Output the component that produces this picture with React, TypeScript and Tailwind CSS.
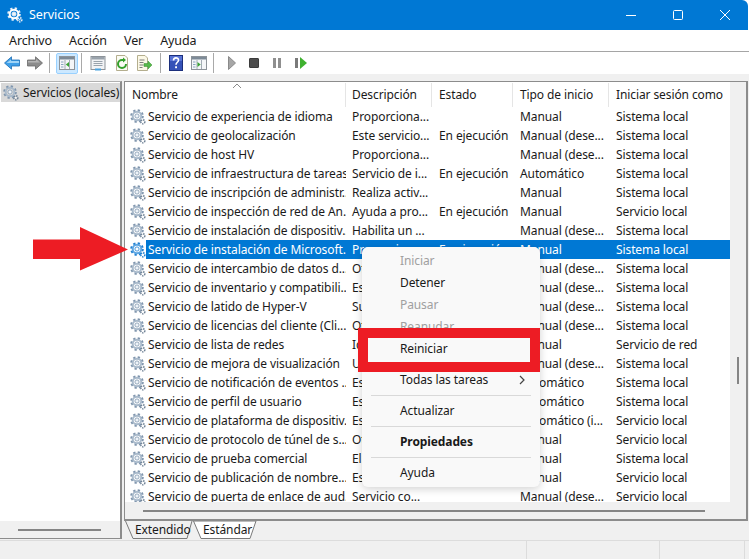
import React from "react";

type Row = [string, string, string, string, string];
const rows: Row[] = [
  ["Servicio de experiencia de idioma", "Proporciona...", "", "Manual", "Sistema local"],
  ["Servicio de geolocalización", "Este servicio...", "En ejecución", "Manual (dese...", "Sistema local"],
  ["Servicio de host HV", "Proporciona...", "", "Manual (dese...", "Sistema local"],
  ["Servicio de infraestructura de tareas...", "Servicio de i...", "En ejecución", "Automático", "Sistema local"],
  ["Servicio de inscripción de administr...", "Realiza activ...", "", "Manual", "Sistema local"],
  ["Servicio de inspección de red de An...", "Ayuda a pro...", "En ejecución", "Manual", "Servicio local"],
  ["Servicio de instalación de dispositiv...", "Habilita un ...", "", "Manual (dese...", "Sistema local"],
  ["Servicio de instalación de Microsoft...", "Proporciona...", "En ejecución", "Manual", "Sistema local"],
  ["Servicio de intercambio de datos d...", "Ofrece...", "", "Manual (dese...", "Sistema local"],
  ["Servicio de inventario y compatibili...", "Es...", "", "Manual (dese...", "Sistema local"],
  ["Servicio de latido de Hyper-V", "Su...", "", "Manual (dese...", "Sistema local"],
  ["Servicio de licencias del cliente (Cli...", "Ot...", "", "Manual (dese...", "Sistema local"],
  ["Servicio de lista de redes", "Id...", "", "Manual", "Servicio de red"],
  ["Servicio de mejora de visualización", "Un...", "", "Manual (dese...", "Sistema local"],
  ["Servicio de notificación de eventos ...", "Es...", "", "Automático", "Sistema local"],
  ["Servicio de perfil de usuario", "Es...", "", "Automático", "Sistema local"],
  ["Servicio de plataforma de dispositiv...", "Es...", "", "Automático (i...", "Servicio local"],
  ["Servicio de protocolo de túnel de s...", "Ot...", "", "Manual", "Servicio local"],
  ["Servicio de prueba comercial", "El...", "", "Manual", "Sistema local"],
  ["Servicio de publicación de nombre...", "Es...", "", "Manual", "Servicio local"],
  ["Servicio de puerta de enlace de aud...", "Servicio co...", "", "Manual (dese...", "Servicio local"],
];

function Gear({ selected = false, light = false }: { selected?: boolean; light?: boolean }) {
  const main = selected ? "#1f7fd0" : light ? "#e8eef5" : "#7f95ad";
  const ring = selected ? "#5ea6e2" : light ? "#ffffff" : "#a9bacb";
  const small = selected ? "#1f7fd0" : light ? "#e8eef5" : "#6f8296";
  return (
    <svg width="16" height="16" viewBox="0 0 16 16" className="shrink-0">
      <circle cx="7" cy="7" r="5.6" fill="none" stroke={main} strokeWidth="2.4" strokeDasharray="2.2 2.2" />
      <circle cx="7" cy="7" r="4.3" fill="none" stroke={ring} strokeWidth="2" />
      <circle cx="7" cy="7" r="2.1" fill={selected ? "#ffffff" : "#eef3f8"} stroke={main} strokeWidth="0.8" />
      <circle cx="12.8" cy="12.8" r="2" fill="none" stroke={small} strokeWidth="1.6" strokeDasharray="1.3 0.9" />
      <circle cx="12.8" cy="12.8" r="0.8" fill="#ffffff" />
    </svg>
  );
}

function Sep() {
  return <div className="w-px h-[20px] bg-[#a9a9a9]" />;
}

function WinIcon({ accent }: { accent: "back" | "play" }) {
  return (
    <svg width="16" height="16" viewBox="0 0 16 16">
      <rect x="0.5" y="1.5" width="15" height="13" fill="#f4f6f8" stroke="#8d9399" />
      <rect x="1" y="2" width="14" height="2.5" fill="#7d8a97" />
      <path d="M6 5v9M10.5 5v9" stroke="#a3acb5" />
      {accent === "back" ? (
        <path d="M10 7v5L6.8 9.5z" fill="#3aa335" />
      ) : (
        <path d="M6.5 7v5l3.2-2.5z" fill="#3aa335" />
      )}
      <path d="M2 7h2.5M2 9.5h2.5M2 12h2.5" stroke="#8aa4c0" />
    </svg>
  );
}

function Toolbar() {
  return (
    <div className="h-[22px] flex items-center bg-white shrink-0">
      <div className="w-[4px]" />
      <svg width="16" height="14" viewBox="0 0 16 14">
        <path d="M0.5 7L7.5 0.8V4H15.5V10H7.5V13.2z" fill="#3f9fe8" stroke="#1e6eb5" strokeWidth="0.8" />
        <path d="M2.5 7L7 3.5V5H15V7z" fill="#9fd4f7" />
      </svg>
      <div className="w-[7px]" />
      <svg width="16" height="14" viewBox="0 0 16 14">
        <path d="M15.5 7L8.5 0.8V4H0.5V10H8.5V13.2z" fill="#8c8c8c" stroke="#6b6b6b" strokeWidth="0.8" />
        <path d="M1 5h8V3l4 3.5H1z" fill="#b5b5b5" />
      </svg>
      <div className="w-[6px]" />
      <Sep />
      <div className="w-[6px]" />
      <div className="w-[22px] h-[21px] flex items-center justify-center bg-[#cce8ff] border border-[#99d1ff] rounded-[2px]">
        <WinIcon accent="back" />
      </div>
      <div className="w-[3px]" />
      <Sep />
      <div className="w-[8px]" />
      <svg width="16" height="16" viewBox="0 0 16 16">
        <rect x="1" y="1.5" width="14" height="13" fill="#f2f3f5" stroke="#8d9399" />
        <rect x="1.5" y="2" width="13" height="2.5" fill="#9aa3ac" />
        <path d="M3.5 6.5h9M3.5 8.5h9M3.5 10.5h9" stroke="#9aa3ac" />
        <rect x="5" y="13.5" width="6" height="2" fill="#4aa3e0" />
      </svg>
      <div className="w-[8px]" />
      <svg width="16" height="16" viewBox="0 0 16 16">
        <path d="M2.5 0.5H11L13.5 3V15.5H2.5z" fill="#fbfbf4" stroke="#b4ae8e" />
        <path d="M12 9A4 4 0 1 1 8 5H10" fill="none" stroke="#34a02c" strokeWidth="2" />
        <path d="M9 2.5L12 5L9 7.5z" fill="#34a02c" />
      </svg>
      <div className="w-[6px]" />
      <svg width="16" height="16" viewBox="0 0 16 16">
        <path d="M1.5 0.5H9L11.5 3V15.5H1.5z" fill="#fbf8e6" stroke="#b4ae8e" />
        <path d="M3.5 5h5M3.5 7.5h4M3.5 10h4M3.5 12.5h3" stroke="#7c7c7c" />
        <path d="M8 8.5h4V6l4 4-4 4v-2.5H8z" fill="#56b84a" stroke="#3b8e33" strokeWidth="0.5" />
      </svg>
      <div className="w-[8px]" />
      <Sep />
      <div className="w-[8px]" />
      <svg width="14" height="16" viewBox="0 0 14 16">
        <rect x="0.5" y="0.5" width="13" height="15" fill="#3552b8" stroke="#1c2f7c" />
        <rect x="1" y="1" width="12" height="5" fill="#5873d4" />
        <path d="M4.5 5.5C4.5 2 9.5 2 9.5 5.2C9.5 7.3 7 7.3 7 9.8" fill="none" stroke="#ffffff" strokeWidth="1.6" />
        <rect x="6.1" y="11.3" width="1.9" height="1.9" fill="#ffffff" />
      </svg>
      <div className="w-[8px]" />
      <WinIcon accent="play" />
      <div className="w-[6px]" />
      <Sep />
      <div className="w-[14px]" />
      <svg width="8" height="14" viewBox="0 0 8 14">
        <path d="M0.5 0.5L7.5 7L0.5 13.5z" fill="#a6a6a6" stroke="#8a8a8a" />
      </svg>
      <div className="w-[13px]" />
      <div className="w-[10px] h-[10px] bg-[#4d4d4d] rounded-[1px] border border-[#3c3c3c]" />
      <div className="w-[14px]" />
      <div className="flex gap-[2px]">
        <div className="w-[3px] h-[10px] bg-[#8f8f8f]" />
        <div className="w-[3px] h-[10px] bg-[#8f8f8f]" />
      </div>
      <div className="w-[14px]" />
      <div className="w-[3px] h-[10px] bg-[#7a7a7a] mr-[2px]" />
      <svg width="7" height="12" viewBox="0 0 7 12">
        <path d="M0 0L7 6L0 12z" fill="#3fb12f" />
      </svg>
    </div>
  );
}

function ListRow({ r, selected }: { r: Row; selected: boolean }) {
  return (
    <div className="flex h-[19px] items-center shrink-0 whitespace-nowrap">
      <div className="w-[21px] pl-[5px] shrink-0">
        <Gear selected={selected} />
      </div>
      <div className={selected ? "flex h-[19px] items-center bg-[#0078d4] text-white" : "flex h-[19px] items-center text-[#1a1a1a]"}>
        <div className="w-[200px] pl-[2px] overflow-hidden">{r[0]}</div>
        <div className="w-[86px] pl-[6px] overflow-hidden">{r[1]}</div>
        <div className="w-[81px] pl-[7px] overflow-hidden">{r[2]}</div>
        <div className="w-[96px] pl-[7px] overflow-hidden">{r[3]}</div>
        <div className="w-[121px] pl-[7px] overflow-hidden">{r[4]}</div>
      </div>
    </div>
  );
}

function HeadCell({ w, pl, children, last }: { w: string; pl: string; children: React.ReactNode; last?: boolean }) {
  return (
    <div className={`${w} ${pl} h-[24px] flex items-center ${last ? "" : "border-r border-[#e5e5e5]"}`}>{children}</div>
  );
}

function MenuItem({ label, disabled, bold, chevron }: { label: string; disabled?: boolean; bold?: boolean; chevron?: boolean }) {
  return (
    <div
      className={`h-[22px] pl-[38px] pr-[15px] flex items-center justify-between ${
        disabled ? "text-[#a0a0a0]" : "text-[#1a1a1a]"
      } ${bold ? "font-bold" : ""}`}
    >
      <span>{label}</span>
      {chevron && (
        <svg width="6" height="10" viewBox="0 0 6 10">
          <path d="M1 1L5 5L1 9" fill="none" stroke="#444" strokeWidth="1.2" />
        </svg>
      )}
    </div>
  );
}

function MenuSep() {
  return <div className="mx-[9px] h-px bg-[#d9d9d9]" />;
}

export default function App() {
  return (
    <div className="relative w-[749px] h-[559px] overflow-hidden bg-white flex flex-col font-['Noto_Sans','Open_Sans',sans-serif] text-[12px] leading-[16px] text-[#1a1a1a] tracking-[-0.1px]">
      {/* title bar */}
      <div className="h-[30px] shrink-0 mr-px bg-[#0078d4] rounded-tr-[6px] flex items-center pl-[7px] text-white">
        <Gear light />
        <span className="ml-[6px] text-[12.5px]">Servicios</span>
        <div className="ml-auto flex items-center">
          <svg width="12" height="12" viewBox="0 0 12 12" className="mr-[35px]">
            <path d="M1 6.5h10" stroke="#fff" />
          </svg>
          <svg width="12" height="12" viewBox="0 0 12 12" className="mr-[35px]">
            <rect x="1.5" y="1.5" width="9" height="9" rx="1" fill="none" stroke="#fff" />
          </svg>
          <svg width="12" height="12" viewBox="0 0 12 12" className="mr-[17px]">
            <path d="M1 1L11 11M11 1L1 11" stroke="#fff" />
          </svg>
        </div>
      </div>

      {/* menu */}
      <div className="h-[22px] shrink-0 flex items-center pl-[9px] gap-[17px] border-b border-[#a5a5a5] text-[12.5px]">
        <span>Archivo</span>
        <span>Acción</span>
        <span>Ver</span>
        <span>Ayuda</span>
      </div>

      <Toolbar />
      <div className="h-[7px] shrink-0 bg-[#f0f0f0]" />

      {/* main */}
      <div className="flex-1 min-h-0 flex bg-[#f0f0f0]">
        {/* left tree */}
        <div className="w-[122px] shrink-0 h-[458px] flex flex-col bg-white border-r-2 border-b border-t border-[#8c8c8c] border-t-[#b0b0b0]">
          <div className="flex-1 pt-[1px] pl-[1px]">
            <div className="h-[19px] flex items-center bg-[#d9d9d9] pl-[2px] gap-[4px] whitespace-nowrap">
              <Gear />
              <span>Servicios (locales)</span>
            </div>
          </div>
          <div className="h-[17px] bg-[#f0f0f0] flex items-center pl-[18px]">
            <div className="w-[83px] h-[2px] bg-[#858585]" />
          </div>
        </div>
        <div className="w-[2px] shrink-0" />

        {/* right panel */}
        <div className="w-[624px] shrink-0 flex flex-col">
          <div className="h-[440px] flex flex-col border border-[#8c8c8c] bg-white border-r-2 border-b-2">
            <div className="flex-1 min-h-0 flex">
              <div className="w-[605px] shrink-0 flex flex-col overflow-hidden">
                <div className="relative flex h-[25px] shrink-0 pt-px">
                  <HeadCell w="w-[221px]" pl="pl-[7px]">
                    Nombre
                  </HeadCell>
                  <HeadCell w="w-[86px]" pl="pl-[6px]">
                    Descripción
                  </HeadCell>
                  <HeadCell w="w-[81px]" pl="pl-[7px]">
                    Estado
                  </HeadCell>
                  <HeadCell w="w-[96px]" pl="pl-[7px]">
                    Tipo de inicio
                  </HeadCell>
                  <HeadCell w="w-[121px]" pl="pl-[7px]" last>
                    Iniciar sesión como
                  </HeadCell>
                  <svg width="10" height="6" viewBox="0 0 10 6" className="absolute left-[107px] top-[1px]">
                    <path d="M1 5L5 1L9 5" fill="none" stroke="#8a8a8a" />
                  </svg>
                </div>
                <div className="flex-1 min-h-0 overflow-hidden">
                  {rows.map((r, i) => (
                    <ListRow key={r[0]} r={r} selected={i === 7} />
                  ))}
                </div>
              </div>
              <div className="relative flex-1 bg-[#f0f0f0]">
                <div className="absolute left-[7px] top-[275px] w-[2px] h-[27px] bg-[#858585]" />
              </div>
            </div>
            <div className="h-[17px] shrink-0 bg-[#f0f0f0] flex items-center pl-[18px]">
              <div className="w-[562px] h-[2px] bg-[#858585]" />
            </div>
          </div>

          {/* tabs */}
          <div className="h-[18px] flex items-start pl-px shrink-0">
            <div className="relative w-[70px] h-[18px] flex items-center pl-[10px]">
              <svg width="70" height="18" viewBox="0 0 70 18" className="absolute left-0 top-0">
                <path d="M0.5 0L8 17.5H62L67 0" fill="#f0f0f0" stroke="#7a7a7a" />
              </svg>
              <span className="relative">Extendido</span>
            </div>
            <div className="relative w-[64px] h-[18px] -ml-[2px] flex items-center pl-[10px]">
              <svg width="64" height="18" viewBox="0 0 64 18" className="absolute left-0 top-0">
                <path d="M0.5 0L8 17.5H57L63 0z" fill="#ffffff" stroke="#7a7a7a" />
              </svg>
              <span className="relative">Estándar</span>
            </div>
          </div>
        </div>
      </div>

      {/* status bar */}
      <div className="h-[19px] shrink-0 bg-[#f0f0f0] border-t border-[#dcdcdc] flex">
        <div className="w-[527px] border-r border-[#dcdcdc]" />
        <div className="w-[133px] border-r border-[#dcdcdc]" />
        <div className="w-[85px] border-r border-[#dcdcdc]" />
      </div>

      {/* red arrow */}
      <svg width="96" height="44" viewBox="0 0 96 44" className="absolute left-[33px] top-[227px]">
        <path d="M0 12.5H47V0L95 22.5L47 43.5V32H0z" fill="#ed1c24" />
      </svg>

      {/* context menu */}
      <div className="absolute left-[362px] top-[247px] w-[178px] h-[240px] bg-[#f9f9f9] rounded-[6px] shadow-[0_2px_8px_rgba(0,0,0,0.18)] pt-[3px] whitespace-nowrap">
        <MenuItem label="Iniciar" disabled />
        <MenuItem label="Detener" />
        <MenuItem label="Pausar" disabled />
        <MenuItem label="Reanudar" disabled />
        <MenuItem label="Reiniciar" />
        <div className="h-[9px]" />
        <MenuItem label="Todas las tareas" chevron />
        <div className="h-[4px]" />
        <MenuSep />
        <div className="h-[4px]" />
        <MenuItem label="Actualizar" />
        <div className="h-[4px]" />
        <MenuSep />
        <div className="h-[4px]" />
        <MenuItem label="Propiedades" bold />
        <div className="h-[4px]" />
        <MenuSep />
        <div className="h-[4px]" />
        <MenuItem label="Ayuda" />
      </div>

      {/* red highlight */}
      <div className="absolute left-[358px] top-[328px] w-[182px] h-[44px] border-[10px] border-[#ed1c24]" />
    </div>
  );
}
